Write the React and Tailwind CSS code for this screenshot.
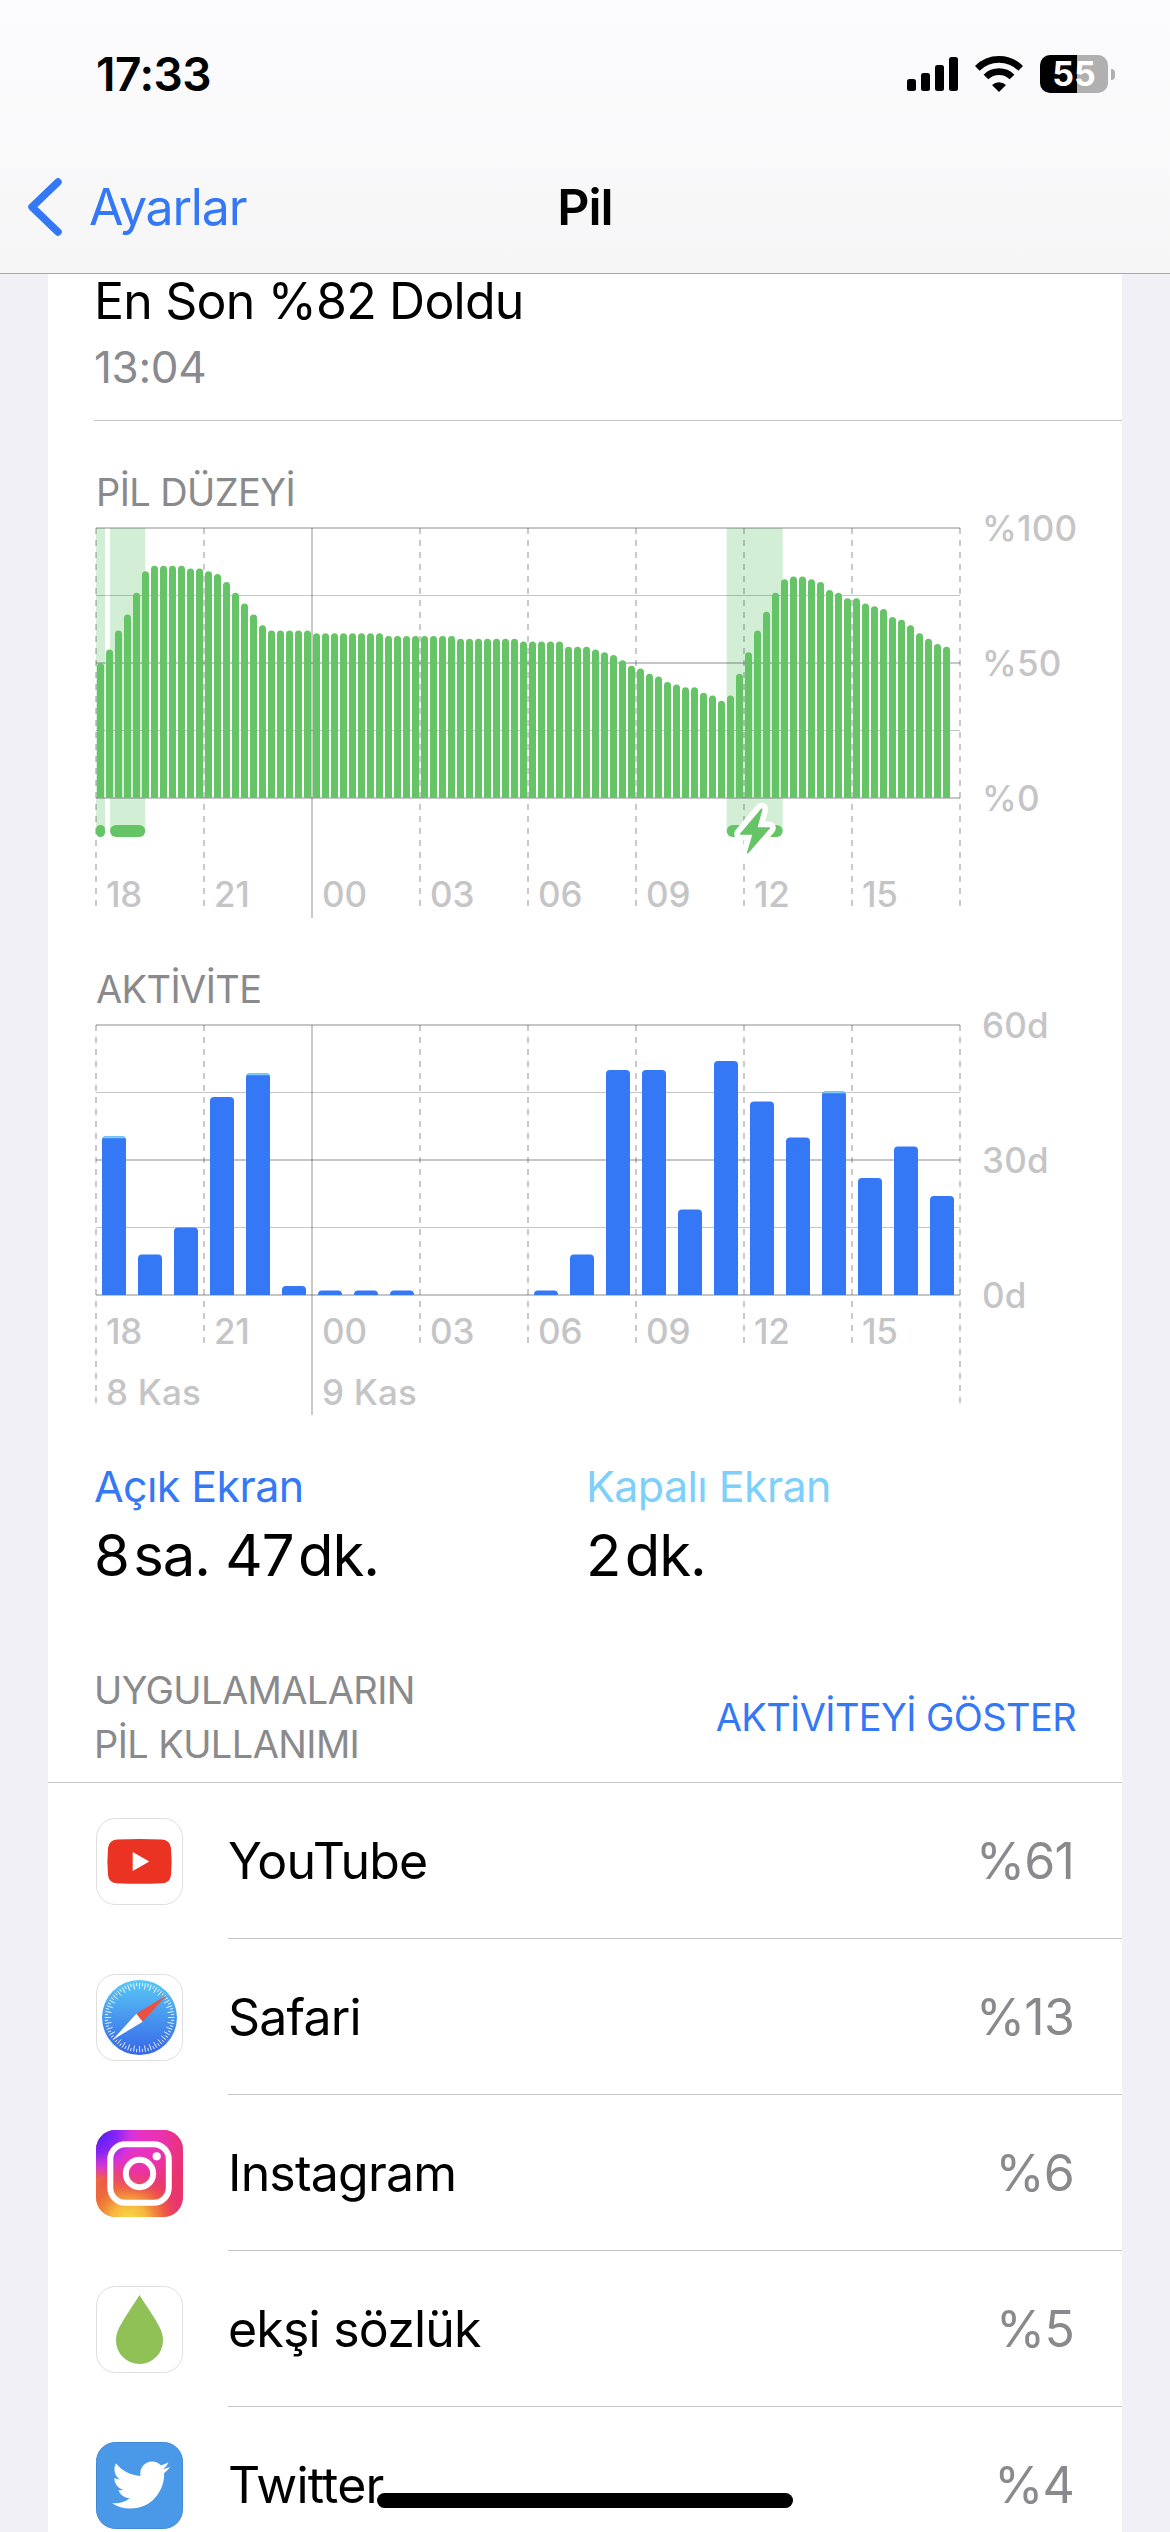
import React from "react";
import { FaTwitter } from "react-icons/fa";

// Battery level in percent, one value per 15 minutes
const batteryLevels = [
  50, 55, 62, 68, 76, 84, 86, 86, 86, 86, 85, 85, 84, 83, 80, 76, 72, 68, 64,
  62, 62, 62, 62, 62, 61, 61, 61, 61, 61, 61, 61, 61, 60, 60, 60, 60, 60, 60,
  60, 60, 59, 59, 59, 59, 59, 59, 59, 58, 58, 58, 58, 58, 56, 56, 56, 55, 54,
  53, 51, 49, 48, 46, 45, 43, 42, 41, 41, 39, 38, 36, 38, 46, 54, 62, 69, 76,
  81, 82, 82, 81, 80, 77, 76, 74, 74, 72, 71, 70, 67, 66, 64, 61, 59, 57, 56,
];

// Minutes per hour, "off" is the screen off part
const activity = [
  { on: 35, off: 0.3 }, { on: 9 }, { on: 15 }, { on: 44 }, { on: 49, off: 0.3 }, { on: 2 },
  { on: 1 }, { on: 1 }, { on: 1 }, { on: 0 }, { on: 0 }, { on: 0 },
  { on: 1 }, { on: 9 }, { on: 50 }, { on: 50 }, { on: 19 }, { on: 52 },
  { on: 43 }, { on: 35 }, { on: 45, off: 0.3 }, { on: 26 }, { on: 33 }, { on: 22 },
];

const hours = ["18", "21", "00", "03", "06", "09", "12", "15"];

const charging = [
  { x: 48, width: 9 },
  { x: 62, width: 35.3 },
  { x: 678.7, width: 56 },
];

const HorizontalLines = ({ top }) => (
  <g fill="#3c3c43" fillOpacity="0.29">
    <rect x="48" y={top - 1} width="864" height="2" />
    <rect x="48" y={top + 67} width="864" height="1" />
    <rect x="48" y={top + 134} width="864" height="2" />
    <rect x="48" y={top + 202} width="864" height="1" />
    <rect x="48" y={top + 269} width="864" height="2" />
  </g>
);

const VerticalLines = ({ top, bottom, edgeBottom, solidBottom }) => (
  <g stroke="#3c3c43" strokeOpacity="0.27" strokeWidth="2">
    {[0, 1, 2, 3, 4, 5, 6, 7, 8].map((i) => (
      <line
        key={i}
        x1={48 + i * 108}
        x2={48 + i * 108}
        y1={top}
        y2={i === 2 ? solidBottom : i === 0 || i === 8 ? edgeBottom : bottom}
        strokeDasharray={i === 2 ? undefined : "6 6"}
      />
    ))}
  </g>
);

const HourLabels = ({ y }) => (
  <g className="fill-[#c5c5c7] text-[35px] font-medium tracking-[-0.2px]">
    {hours.map((hour, i) => (
      <text key={hour} x={58 + i * 108} y={y}>
        {hour}
      </text>
    ))}
  </g>
);

const AxisLabels = ({ labels, top }) => (
  <g className="fill-[#c5c5c7] text-[35px] font-medium tracking-[0.2px]">
    {labels.map((label, i) => (
      <text key={label} x="934" y={top + 13 + i * 135}>
        {label}
      </text>
    ))}
  </g>
);

const bolt = "M713.7 49.3 L692.7 74 L705.3 74 L699.7 92.7 L721.3 68 L708.7 68 Z";

const BatteryChart = () => (
  <svg width="1074" height="416" viewBox="0 0 1074 416" className="block">
    {charging.map((c) => (
      <rect key={c.x} x={c.x} y="14" width={c.width} height="303" fill="#d2efd5" />
    ))}
    <HorizontalLines top={14} />
    <VerticalLines top={14} bottom={398} edgeBottom={398} solidBottom={404} />
    <g fill="#65c466">
      {batteryLevels.map((level, i) => {
        const x = 49 + i * 9;
        const y = 284 - level * 2.7;
        return (
          <path key={i} d={`M${x} 284 V${y + 3.5} a3.5 3.5 0 0 1 7 0 V284 Z`} />
        );
      })}
      {charging.map((c) => (
        <rect key={c.x} x={c.x} y="311" width={c.width} height="12" rx={Math.min(6, c.width / 2)} />
      ))}
    </g>
    <g transform="translate(0 246)" strokeLinejoin="round">
      <path d={bolt} fill="#fff" stroke="#fff" strokeWidth="13" />
      <path d={bolt} fill="#65c466" stroke="#65c466" strokeWidth="1.5" />
    </g>
    <HourLabels y={393} />
    <AxisLabels labels={["%100", "%50", "%0"]} top={14} />
  </svg>
);

const ActivityChart = () => (
  <svg width="1074" height="416" viewBox="0 0 1074 416" className="block">
    <HorizontalLines top={14} />
    <VerticalLines top={14} bottom={338} edgeBottom={398} solidBottom={404} />
    {activity.map(({ on, off }, i) => {
      if (!on) return null;
      const x = 54 + i * 36;
      const y = 284 - (on + (off || 0)) * 4.5;
      const r = Math.min(4, 284 - y);
      return (
        <g key={i}>
          <path
            d={`M${x} 284 V${y + r} q0 ${-r} ${r} ${-r} h${24 - 2 * r} q${r} 0 ${r} ${r} V284 Z`}
            fill="#3478f6"
          />
          {off && (
            <path d={`M${x + 0.8} ${y + 2} q1 -2 3.2 -2 h16 q2.2 0 3.2 2 Z`} fill="#7dcffc" />
          )}
        </g>
      );
    })}
    <HourLabels y={333} />
    <g className="fill-[#c5c5c7] text-[35px] font-medium tracking-[0.2px]">
      <text x="58" y="394">8 Kas</text>
      <text x="274" y="394">9 Kas</text>
    </g>
    <AxisLabels labels={["60d", "30d", "0d"]} top={14} />
  </svg>
);

const YouTubeIcon = () => (
  <svg width="87" height="87" viewBox="0 0 87 87">
    <rect x="0.5" y="0.5" width="86" height="86" rx="19" fill="#fff" stroke="#dedede" />
    <path
      d="M21 21.5 Q43.5 20.5 66 21.5 Q74 22 75 30 Q76.2 43.5 75 57 Q74 65 66 65.3 Q43.5 66.4 21 65.3 Q13 65 12 57 Q10.800 43.5 12 30 Q13 22 21 21.500 Z"
      fill="#ea3323"
    />
    <path d="M36.700 34 V53 L53.300 43.500 Z" fill="#fff" />
  </svg>
);

const SafariIcon = () => (
  <svg width="87" height="87" viewBox="0 0 87 87">
    <defs>
      <linearGradient id="safari" x1="0" y1="0" x2="0" y2="1">
        <stop offset="0" stopColor="#5ac8f5" />
        <stop offset="1" stopColor="#3566e8" />
      </linearGradient>
    </defs>
    <rect x="0.5" y="0.5" width="86" height="86" rx="19" fill="#fff" stroke="#dedede" />
    <circle cx="43.5" cy="43.5" r="37.5" fill="url(#safari)" />
    <g stroke="#fff" strokeWidth="0.8">
      {Array.from({ length: 72 }, (_, i) => (
        <line
          key={i}
          x1="43.5"
          x2="43.5"
          y1="8.700"
          y2={i % 2 ? 12 : 15}
          transform={`rotate(${i * 5} 43.5 43.5)`}
        />
      ))}
    </g>
    <path d="M71 21 L40.300 39.700 L46.700 47.700 Z" fill="#eb5140" />
    <path d="M16.500 66 L40.300 39.700 L46.700 47.700 Z" fill="#fff" />
  </svg>
);

const InstagramIcon = () => (
  <svg width="87" height="87" viewBox="0 0 87 87">
    <defs>
      <linearGradient id="igBase" x1="0" y1="0.9" x2="1" y2="0.3">
        <stop offset="0" stopColor="#ef7d2e" />
        <stop offset="0.5" stopColor="#ea3a68" />
        <stop offset="1" stopColor="#e9306f" />
      </linearGradient>
      <radialGradient id="igYellow" cx="0.38" cy="1.05" r="0.6">
        <stop offset="0" stopColor="#fade45" />
        <stop offset="0.35" stopColor="#f6b63e" />
        <stop offset="0.7" stopColor="#ee6b35" stopOpacity="0.7" />
        <stop offset="1" stopColor="#ea3a68" stopOpacity="0" />
      </radialGradient>
      <radialGradient id="igPink" cx="0.5" cy="0.15" r="0.6">
        <stop offset="0" stopColor="#e532d0" />
        <stop offset="0.5" stopColor="#ea32b8" stopOpacity="0.8" />
        <stop offset="1" stopColor="#ea3a8c" stopOpacity="0" />
      </radialGradient>
      <radialGradient id="igPurple" cx="0" cy="0.02" r="0.55">
        <stop offset="0" stopColor="#4a1df5" />
        <stop offset="0.45" stopColor="#8a25f5" />
        <stop offset="0.75" stopColor="#d232e6" stopOpacity="0.8" />
        <stop offset="1" stopColor="#e532c0" stopOpacity="0" />
      </radialGradient>
    </defs>
    <rect width="87" height="87" rx="19.5" fill="url(#igBase)" />
    <rect width="87" height="87" rx="19.5" fill="url(#igYellow)" />
    <rect width="87" height="87" rx="19.5" fill="url(#igPink)" />
    <rect width="87" height="87" rx="19.5" fill="url(#igPurple)" />
    <g fill="none" stroke="#fff" strokeWidth="6">
      <rect x="14.300" y="14.300" width="58.500" height="58.500" rx="15" />
      <circle cx="43.500" cy="43.500" r="13.700" />
    </g>
    <circle cx="60.700" cy="26.300" r="4.100" fill="#fff" />
  </svg>
);

const EksiIcon = () => (
  <svg width="87" height="87" viewBox="0 0 87 87">
    <rect x="0.5" y="0.5" width="86" height="86" rx="19" fill="#fff" stroke="#dedede" />
    <path
      d="M43.500 9 C50 20 58 30 63.500 41 C66 46 67 50 67 54.500 A23.500 23.500 0 0 1 20 54.500 C20 50 21 46 23.500 41 C29 30 37 20 43.500 9 Z"
      fill="#8fc157"
    />
  </svg>
);

const TwitterIcon = () => (
  <div className="flex h-[87px] w-[87px] items-center justify-center rounded-[19.5px] border border-[#4289d3] bg-[#4a99e9] pl-[3px]">
    <FaTwitter className="h-[58px] w-[58px] text-white" />
  </div>
);

const apps = [
  { name: "YouTube", usage: "%61", icon: <YouTubeIcon /> },
  { name: "Safari", usage: "%13", icon: <SafariIcon /> },
  { name: "Instagram", usage: "%6", icon: <InstagramIcon /> },
  { name: "ekşi sözlük", usage: "%5", icon: <EksiIcon /> },
  { name: "Twitter", usage: "%4", icon: <TwitterIcon /> },
];

const StatusBar = () => (
  <div className="flex h-[148px] items-center justify-between pr-[55px] pl-24">
    <span className="text-[46px] font-semibold tracking-[-0.5px]">17:33</span>
    <div className="flex items-center">
      <svg width="52" height="34" viewBox="0 0 52 34">
        <rect x="0" y="22" width="9" height="12" rx="2.500" />
        <rect x="14" y="16" width="9" height="18" rx="2.500" />
        <rect x="28" y="8" width="9" height="26" rx="2.500" />
        <rect x="42" y="0" width="9" height="34" rx="2.500" />
      </svg>
      <svg width="48" height="36" viewBox="0 0 144 108" className="ml-4">
        <g fill="none" stroke="#000" strokeWidth="20">
          <path d="M7 37 A92 92 0 0 1 137 37" />
          <path d="M33 63 A55 55 0 0 1 111 63" />
        </g>
        <path d="M72 108 L51 87 A30 30 0 0 1 93 87 Z" />
      </svg>
      <div className="ml-[17px] flex h-[38px] w-[68px] items-center justify-center rounded-[10px] bg-linear-to-r from-black from-54% to-[#b0b0b0] to-54%">
        <span className="text-[34px] leading-[38px] font-bold text-white">55</span>
      </div>
      <div className="ml-[3px] h-[11px] w-1 rounded-r-full bg-[#b0b0b0]" />
    </div>
  </div>
);

const NavBar = () => (
  <div className="grid h-[118px] grid-cols-3 items-center text-[50px]">
    <div className="flex items-center pl-[27px] text-[#3478f6]">
      <svg width="36" height="58" viewBox="0 0 36 58" fill="none">
        <path d="M31 4 L5 29 L31 54" stroke="#3478f6" strokeWidth="7.500" strokeLinecap="round" strokeLinejoin="round" />
      </svg>
      <span className="ml-[26px] tracking-[-1.2px]">Ayarlar</span>
    </div>
    <span className="text-center font-semibold tracking-[-1px]">Pil</span>
  </div>
);

const App = () => {
  return (
    <div className="relative flex h-[2532px] w-[1170px] flex-col overflow-hidden bg-[#f1f0f6] font-['Inter',sans-serif] text-black">
      <header className="h-[274px] shrink-0 border-b border-[#a9a9ab] bg-linear-to-b from-[#fcfbfd] to-[#f6f6f7]">
        <StatusBar />
        <NavBar />
      </header>

      <main className="mx-12 bg-white">
        <div className="pl-[46px]">
          <p className="text-[50px] leading-[54px] tracking-[-0.8px]">En Son %82 Doldu</p>
          <p className="mt-3 text-[44px] leading-[54px] tracking-[-0.3px] text-[#8a8a8e]">13:04</p>
          <div className="mt-[26px] h-px bg-[#c6c6c8]" />
        </div>

        <h2 className="mt-[49px] pl-12 text-[38px] leading-[44px] tracking-[-0.6px] text-[#8a8a8c]">PİL DÜZEYİ</h2>
        <BatteryChart />

        <h2 className="mt-[37px] pl-12 text-[38px] leading-[44px] tracking-[-0.6px] text-[#8a8a8c]">AKTİVİTE</h2>
        <ActivityChart />

        <div className="grid grid-cols-[492px_1fr] pt-[33px] pl-[46px]">
          <div>
            <p className="text-[43px] leading-[52px] tracking-[-0.6px] text-[#3478f6]">Açık Ekran</p>
            <p className="mt-2 text-[58px] leading-[70px] tracking-[-1px]">8&#8202;sa. 47&#8202;dk.</p>
          </div>
          <div>
            <p className="text-[43px] leading-[52px] tracking-[-0.6px] text-[#7dcffc]">Kapalı Ekran</p>
            <p className="mt-2 text-[58px] leading-[70px] tracking-[-1px]">2&#8202;dk.</p>
          </div>
        </div>

        <div className="mt-[73px] flex items-center justify-between border-b border-[#c6c6c8] pr-[46px] pb-[11px] pl-[46px] text-[38px] leading-[54px] tracking-[-0.6px]">
          <h2 className="text-[#8a8a8c]">
            UYGULAMALARIN
            <br />
            PİL KULLANIMI
          </h2>
          <a className="text-[#3478f6]">AKTİVİTEYİ GÖSTER</a>
        </div>

        <ul>
          {apps.map(({ name, usage, icon }) => (
            <li key={name} className="flex h-[156px] items-center pl-12">
              <div className="w-[132px]">{icon}</div>
              <div className="flex h-full flex-1 items-center justify-between border-b border-[#c6c6c8] pt-px pr-12 text-[50px] tracking-[-0.8px]">
                <span>{name}</span>
                <span className="text-[#8a8a8e]">{usage}</span>
              </div>
            </li>
          ))}
        </ul>
      </main>

      {/* home indicator */}
      <div className="absolute bottom-6 left-[377px] h-[15px] w-[416px] rounded-full bg-black" />
    </div>
  );
};

export default App;
